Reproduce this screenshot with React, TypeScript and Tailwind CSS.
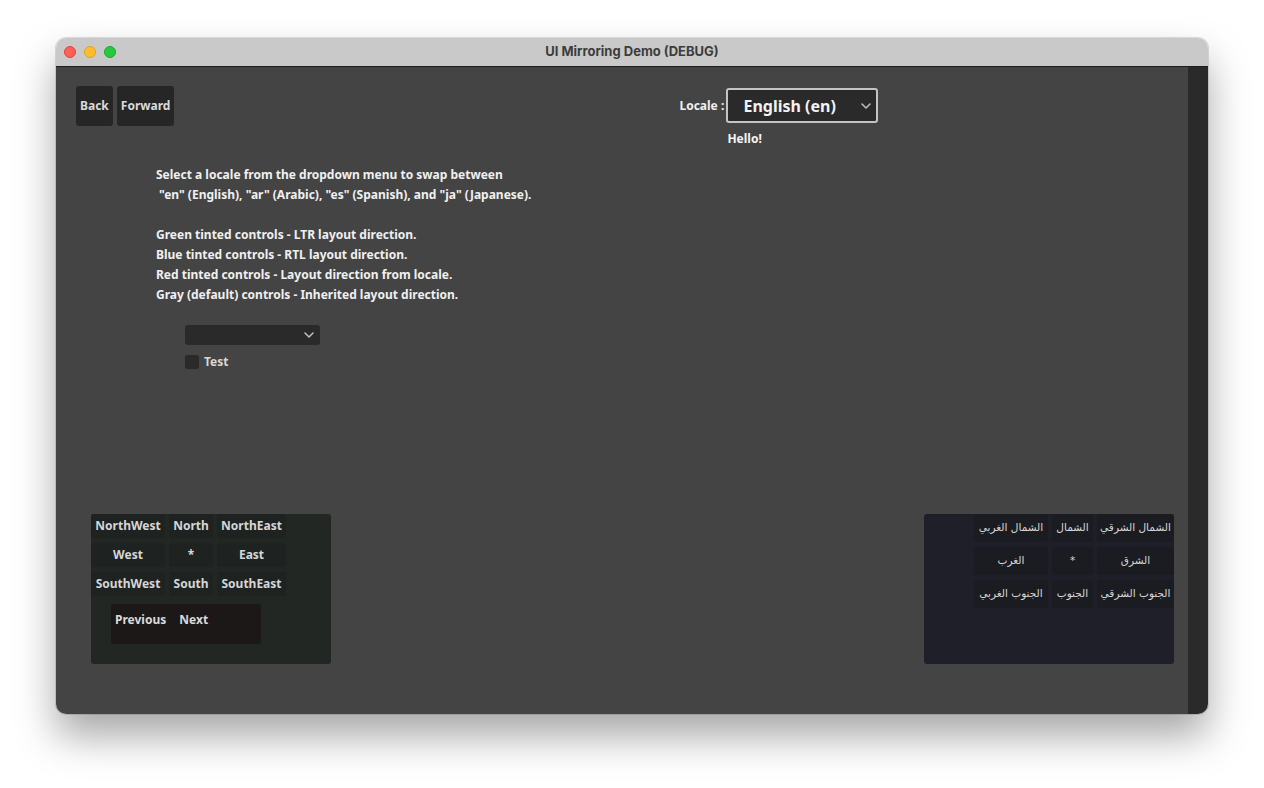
import { useState } from 'react'

const ltrGrid = [
    ['NorthWest', 'North', 'NorthEast'],
    ['West', '*', 'East'],
    ['SouthWest', 'South', 'SouthEast'],
]

const rtlGrid = [
    ['الشمال الشرقي', 'الشمال', 'الشمال الغربي'],
    ['الشرق', '*', 'الغرب'],
    ['الجنوب الشرقي', 'الجنوب', 'الجنوب الغربي'],
]

function Chevron({ className }: { className?: string }) {
    return (
        <svg className={className} width="12" height="8" viewBox="0 0 12 8" fill="none" stroke="currentColor" strokeWidth="1.6" strokeLinecap="round" strokeLinejoin="round">
            <polyline points="2,2 6,6 10,2" />
        </svg>
    )
}

export default function App() {
    const [checked, setChecked] = useState(false)

    return (
        <div className="w-[1264px] h-[788px] bg-white pt-[38px] pl-[56px] font-['Noto_Sans','DejaVu_Sans',sans-serif]">
            <div className="w-[1152px] h-[676px] rounded-[10px] overflow-hidden flex flex-col shadow-[0_22px_40px_rgba(0,0,0,0.35),0_0_0_1px_rgba(0,0,0,0.12)]">
                {/* title bar */}
                <div className="h-[29px] shrink-0 bg-[#c9c9c9] border-b border-[#1e1e1e] flex items-center relative">
                    <div className="flex gap-[8px] pl-[8px]">
                        <span className="w-[12px] h-[12px] rounded-full bg-[#fe5f57] border border-[#e0443e]" />
                        <span className="w-[12px] h-[12px] rounded-full bg-[#febc2e] border border-[#dea123]" />
                        <span className="w-[12px] h-[12px] rounded-full bg-[#28c840] border border-[#1aab29]" />
                    </div>
                    <div className="absolute inset-0 flex items-center justify-center text-[13px] font-bold text-[#3c3c3c] font-['Inter','Liberation_Sans',sans-serif]">
                        UI Mirroring Demo (DEBUG)
                    </div>
                </div>

                <div className="flex flex-1 min-h-0">
                    {/* content */}
                    <div className="flex-1 bg-[#444444] flex flex-col pl-[20px] pt-[19px] pb-[50px] pr-[14px]">
                        <div className="flex items-start">
                            <div className="flex gap-[4px]">
                                <button className="h-[40px] px-[4px] rounded-[3px] bg-[#262626] text-[#dadada] text-[12px] font-bold">Back</button>
                                <button className="h-[40px] px-[4px] rounded-[3px] bg-[#262626] text-[#dadada] text-[12px] font-bold">Forward</button>
                            </div>
                            <div className="ml-[505px] flex flex-col">
                                <div className="flex items-center mt-[2px]">
                                    <span className="text-[12px] font-bold text-[#f0f0f0] w-[47px]">Locale :</span>
                                    <div className="w-[152px] h-[35px] rounded-[3px] border-2 border-[#c4c4c4] bg-[#2a2a2a] flex items-center pl-[15px] pr-[4px]">
                                        <span className="flex-1 text-[16px] font-bold text-[#f2f2f2]">English (en)</span>
                                        <Chevron className="text-[#bdbdbd]" />
                                    </div>
                                </div>
                                <span className="ml-[48px] mt-[7px] text-[12px] font-bold text-[#f5f5f5]">Hello!</span>
                            </div>
                        </div>

                        <div className="ml-[80px] mt-[17px] text-[12px] leading-[20px] font-bold text-[#f0f0f0]">
                            <p>Select a locale from the dropdown menu to swap between</p>
                            <p>&nbsp;"en" (English), "ar" (Arabic), "es" (Spanish), and "ja" (Japanese).</p>
                            <p>&nbsp;</p>
                            <p>Green tinted controls - LTR layout direction.</p>
                            <p>Blue tinted controls - RTL layout direction.</p>
                            <p>Red tinted controls - Layout direction from locale.</p>
                            <p>Gray (default) controls - Inherited layout direction.</p>
                        </div>

                        <div className="ml-[109px] mt-[20px] flex flex-col gap-[8px]">
                            <div className="w-[135px] h-[20px] rounded-[3px] bg-[#2a2a2a] flex items-center justify-end pr-[5px]">
                                <Chevron className="text-[#bdbdbd]" />
                            </div>
                            <label className="flex items-center gap-[5px] cursor-pointer">
                                <span
                                    onClick={() => setChecked(!checked)}
                                    className="w-[14px] h-[14px] rounded-[2px] bg-[#2a2a2a]"
                                />
                                <span className="text-[12px] font-bold text-[#d8d8d8]">Test</span>
                            </label>
                        </div>

                        <div className="mt-auto flex justify-between items-end pl-[15px]">
                            {/* LTR panel */}
                            <div className="w-[240px] h-[150px] rounded-[3px] bg-[#222724] flex flex-col">
                                <div className="grid grid-cols-[74px_44px_69px] grid-rows-[24px_24px_24px] gap-x-[4px] gap-y-[5px]">
                                    {ltrGrid.flat().map((t, i) => (
                                        <button key={i} className="rounded-[3px] bg-[#1e2220] text-[#d6d6d6] text-[12px] font-bold">{t}</button>
                                    ))}
                                </div>
                                <div className="ml-[20px] mt-[8px] w-[150px] h-[40px] rounded-[3px] bg-[#1c1818] flex items-center pl-[4px] pb-[8px] gap-[13px] text-[12px] font-bold text-[#dadada]">
                                    <span>Previous</span>
                                    <span>Next</span>
                                </div>
                            </div>

                            {/* RTL panel */}
                            <div dir="rtl" className="w-[250px] h-[150px] rounded-[3px] bg-[#1f1f29]">
                                <div className="grid grid-cols-[77px_41px_74px] grid-rows-[28px_28px_28px] gap-x-[4px] gap-y-[5px]">
                                    {rtlGrid.flat().map((t, i) => (
                                        <button key={i} className="rounded-[3px] bg-[#1b1c22] text-[#d6d6d6] text-[10.5px] font-['DejaVu_Sans',sans-serif]">{t}</button>
                                    ))}
                                </div>
                            </div>
                        </div>
                    </div>
                    {/* scrollbar strip */}
                    <div className="w-[20px] bg-[#2a2a2a]" />
                </div>
            </div>
        </div>
    )
}
